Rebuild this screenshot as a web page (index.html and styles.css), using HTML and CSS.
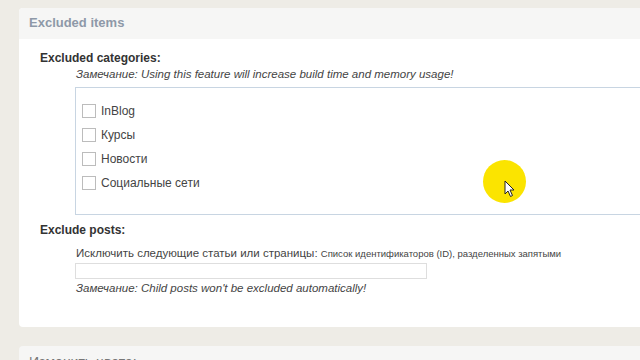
FILE: index.html
```html
<!DOCTYPE html>
<html>
<head>
<meta charset="utf-8">
<link rel="stylesheet" href="styles.css">
</head>
<body>
<div class="page">
  <section class="panel">
    <div class="panel-head">Excluded items</div>
    <div class="panel-body">
      <div class="label">Excluded categories:</div>
      <div class="indent">
        <div class="note">Замечание: Using this feature will increase build time and memory usage!</div>
        <div class="catbox">
          <div class="row"><span class="cb"></span><span>InBlog</span></div>
          <div class="row"><span class="cb"></span><span>Курсы</span></div>
          <div class="row"><span class="cb"></span><span>Новости</span></div>
          <div class="row"><span class="cb"></span><span>Социальные сети</span></div>
        </div>
      </div>
      <div class="label label2">Exclude posts:</div>
      <div class="indent">
        <div class="desc">Исключить следующие статьи или страницы: <small>Список идентификаторов (ID), разделенных запятыми</small></div>
        <div class="input"></div>
        <div class="note">Замечание: Child posts won't be excluded automatically!</div>
      </div>
    </div>
  </section>
  <section class="panel panel2">
    <div class="panel-head dark">Изменить цвета:</div>
  </section>
</div>
<div class="spot">
  <svg width="12" height="18" viewBox="0 0 12 18"><path d="M1 1 L1 14 L4 11 L6.5 16.5 L8.5 15.5 L6 10 L10 10 Z" fill="#fff" stroke="#222" stroke-width="1" stroke-linejoin="round"/></svg>
</div>
</body>
</html>
```
FILE: styles.css
```css
html, body { margin: 0; padding: 0; }
body {
  width: 640px; height: 360px; overflow: hidden;
  background: #eeece6;
  font-family: "Liberation Sans", Arial, sans-serif;
  color: #333;
  position: relative;
}
.page { padding: 8px 0 0 19px; }
.panel {
  width: 660px;
  background: #fff;
  border-radius: 4px;
  overflow: hidden;
}
.panel-head {
  background: #f6f6f5;
  height: 31px;
  line-height: 29px;
  padding-left: 10px;
  font-size: 13px;
  font-weight: bold;
  color: #8e99a8;
}
.panel-head.dark { color: #777; font-weight: normal; font-size: 14px; line-height: 32px; }
.panel-body { padding: 11px 0 31px 21px; }
.label { font-size: 12px; font-weight: bold; line-height: 16px; color: #333; }
.label2 { margin-top: 7px; }
.indent { padding-left: 36px; }
.note { font-size: 11.5px; font-style: italic; line-height: 16px; color: #444; }
.catbox {
  margin: 5px 0 0 -1px;
  border: 1px solid #c8d5e2;
  border-right: none;
  padding: 11px 0 0 6px;
  box-sizing: border-box;
  height: 128px;
}
.row { display: flex; align-items: center; height: 24px; font-size: 12px; color: #444; }
.row span:last-child { margin-top: -1px; }
.cb {
  width: 14px; height: 14px;
  border: 1px solid #bcbcbc;
  box-sizing: border-box;
  margin-right: 5px;
  background: #fff;
}
.desc { font-size: 11.5px; line-height: 16px; color: #444; margin-top: 7px; }
.desc small { font-size: 9.5px; }
.input {
  margin: 1px 0 1px -1px;
  width: 352px; height: 16px;
  border: 1px solid #dedede;
  box-sizing: border-box;
}
.panel2 { margin-top: 19px; }
.spot {
  position: absolute;
  left: 483px; top: 160px;
  width: 43px; height: 43px;
  border-radius: 50%;
  background: #fbe400;
}
.spot svg { position: absolute; left: 21px; top: 20px; }
```
